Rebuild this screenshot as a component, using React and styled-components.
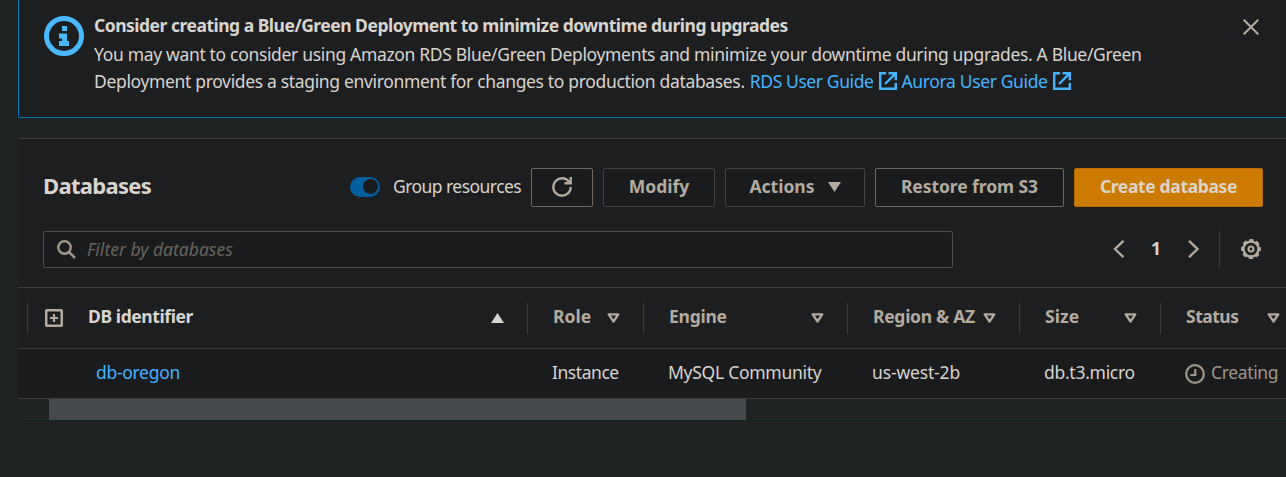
import React from 'react';
import styled, { createGlobalStyle, ThemeProvider } from 'styled-components';

const theme = {
  page: '#1f2324',
  panel: '#1d1e20',
  field: '#1a1b1d',
  line: '#3a3c3e',
  text: '#d8d4cf',
  muted: '#b3aba0',
  faint: '#a09689',
  link: '#44b4ff',
  alert: '#0a77b9',
  orange: '#cc7a00',
};

const GlobalStyle = createGlobalStyle`
  * { box-sizing: border-box; }
  body {
    margin: 0;
    background: ${theme.page};
    color: ${theme.text};
    font-family: "Noto Sans", "Open Sans", sans-serif;
    font-size: 17.5px;
    line-height: 27.5px;
  }
  svg { display: block; flex: none; fill: none; stroke: currentColor; }
`;

const Screen = styled.main`
  width: 1286px;
  height: 477px;
  padding-left: 18px;
  overflow: hidden;
`;

const Alert = styled.section`
  display: flex;
  align-items: flex-start;
  width: 1290px;
  height: 118px;
  padding: 12px 0 0 25px;
  background: ${theme.panel};
  border: 1px solid ${theme.alert};
  border-top: 0;
  border-radius: 0 0 2px 2px;
`;

const InfoIcon = styled.svg`
  margin-top: 4px;
  color: #48b8ff;
`;

const AlertBody = styled.div`
  width: 1146px;
  margin-left: 10px;
`;

const AlertTitle = styled.div`
  height: 28px;
  font-weight: 700;
  letter-spacing: -0.5px;
`;

const AlertLine = styled.div`
  display: flex;
  height: 27px;
  line-height: 28px;
  white-space: pre;
  letter-spacing: ${(p) => p.$ls}px;
`;

const Link = styled.a`
  color: ${theme.link};
  letter-spacing: ${(p) => p.$ls || 0}px;
`;

const DocLink = styled(Link)`
  display: inline-flex;
  gap: 5px;
  margin-left: 5px;
  svg { margin-top: 5px; }
`;

const IconButton = styled.button`
  display: flex;
  align-items: center;
  justify-content: center;
  padding: 0;
  border: 0;
  background: none;
  color: ${theme.muted};
`;

const DismissButton = styled(IconButton)`
  margin: 7px 0 0 3px;
`;

const Panel = styled.section`
  width: 1290px;
  margin-top: 20px;
  background: ${theme.panel};
  border-top: 1px solid ${theme.line};
  box-shadow: 0 1px 1px #152020;
`;

const Header = styled.header`
  display: flex;
  align-items: center;
  height: 68px;
  padding: 29px 0 0 25px;
`;

const Title = styled.h2`
  flex: none;
  width: 307px;
  margin: 0 0 4px;
  font-size: 22px;
  font-weight: 700;
  letter-spacing: -0.7px;
`;

const Toggle = styled.span`
  display: flex;
  justify-content: flex-end;
  width: 30px;
  height: 20px;
  margin-bottom: 2px;
  padding: 2.5px 2px;
  border-radius: 10px;
  background: #025f9e;
  &::after {
    content: '';
    width: 15px;
    height: 15px;
    border-radius: 50%;
    background: ${theme.field};
  }
`;

const ToggleLabel = styled.label`
  width: 138px;
  margin: 0 0 1px 13px;
  letter-spacing: -0.55px;
  white-space: nowrap;
`;

const Actions = styled.div`
  display: flex;
  gap: 10px;
`;

const Button = styled.button`
  display: flex;
  align-items: center;
  justify-content: center;
  gap: 13px;
  width: ${(p) => p.$w}px;
  height: 39px;
  padding: 0 0 3px;
  border: 1px solid ${(p) => (p.$primary ? '#b56d02' : p.$dim ? '#3f4143' : '#6f675b')};
  border-radius: 2px;
  background: ${(p) => (p.$primary ? theme.orange : theme.field)};
  color: ${(p) => (p.$primary ? '#dcd5ca' : theme.muted)};
  font: bold 17.5px "Noto Sans", sans-serif;
  letter-spacing: ${(p) => p.$ls || 0}px;
  white-space: nowrap;
  svg { margin-top: 2px; }
`;

const Tools = styled.div`
  display: flex;
  align-items: center;
  height: 80px;
  padding: 4px 0 0 25px;
`;

const SearchField = styled.div`
  display: flex;
  align-items: center;
  width: 910px;
  height: 37px;
  padding-left: 13px;
  gap: 11px;
  border: 1px solid #4a4c4f;
  border-radius: 2px;
  background: ${theme.field};
  color: ${theme.faint};
`;

const Placeholder = styled.span`
  margin-top: 2px;
  color: #66645e;
  font-style: italic;
`;

const Pager = styled.nav`
  display: flex;
  align-items: center;
  justify-content: space-between;
  width: 86px;
  height: 37px;
  margin-left: 160px;
  color: ${theme.muted};
`;

const PageNumber = styled.b`
  color: ${theme.text};
  font-weight: 700;
`;

const Settings = styled(IconButton)`
  height: 37px;
  margin-left: 20px;
  padding-left: 21px;
  border-left: 1px solid ${theme.line};
`;

const Row = styled.div`
  display: grid;
  grid-template-columns: 500px 116px 204px 172px 141px 143px;
  align-items: center;
  height: ${(p) => p.$h}px;
  padding-left: 9px;
  border-bottom: 1px solid ${theme.line};
`;

const HeadRow = styled(Row)`
  border-top: 1px solid ${theme.line};
`;

const BodyRow = styled(Row)`
  padding-bottom: 1px;
  background: ${theme.field};
`;

const HeadCell = styled.div`
  display: flex;
  align-items: center;
  justify-content: space-between;
  height: 31px;
  padding: 0 23px 0 ${(p) => (p.$first ? 17 : 25)}px;
  border-left: 1px solid ${theme.line};
  color: ${(p) => (p.$first ? theme.text : theme.muted)};
  font-weight: 700;
  letter-spacing: ${(p) => p.$ls}px;
  white-space: nowrap;
`;

const HeadLabel = styled.span`
  display: flex;
  align-items: center;
  gap: 25px;
  height: 31px;
  padding-bottom: 2px;
  svg {
    margin-top: 2px;
    color: ${theme.muted};
  }
`;

const Cell = styled.div`
  display: flex;
  align-items: center;
  gap: 6px;
  padding-left: ${(p) => (p.$first ? 69 : 25)}px;
  color: ${(p) => (p.$pending ? theme.faint : theme.text)};
  letter-spacing: ${(p) => p.$ls || 0}px;
  white-space: nowrap;
  svg { margin-top: 1px; }
`;

const ScrollTrack = styled.div`
  height: 21px;
  padding-left: 31px;
  background: ${theme.page};
`;

const ScrollThumb = styled.div`
  width: 697px;
  height: 21px;
  background: #454a4c;
`;

const ExternalIcon = () => (
  <svg width="18" height="18" viewBox="0 0 18 18" strokeWidth="2.4">
    <path d="M7 1.2H1.2v15.6h15.6V11" />
    <path d="M9.5 1.2h7.3v7M16.5 1.5 6 12" />
  </svg>
);

const Caret = ({ solid, up }) => (
  <svg width="13" height="10" viewBox="0 0 13 10" strokeWidth={solid ? 0 : 2.3} strokeLinejoin="round">
    {solid ? (
      <path fill="currentColor" d={up ? 'M6.5 0 13 10H0z' : 'M6.5 10 0 0h13z'} />
    ) : (
      <path d="M1.7 1.3h9.6L6.5 8.5z" />
    )}
  </svg>
);

const COLUMNS = [
  ['Role', 0],
  ['Engine', -0.25],
  ['Region & AZ', -0.28],
  ['Size', 0.1],
  ['Status', -0.5],
];

export default function App() {
  return (
    <ThemeProvider theme={theme}>
      <GlobalStyle />
      <Screen>
        <Alert>
          <InfoIcon width="40" height="40" viewBox="0 0 40 40">
            <circle cx="20" cy="20" r="17.5" strokeWidth="5" />
            <path stroke="none" fill="currentColor" d="M18 10h5v5h-5zM15 17.5h8V25h2v5H15v-5h3v-2.5h-3z" />
          </InfoIcon>
          <AlertBody>
            <AlertTitle>Consider creating a Blue/Green Deployment to minimize downtime during upgrades</AlertTitle>
            <AlertLine $ls={-0.33}>
              You may want to consider using Amazon RDS Blue/Green Deployments and minimize your downtime during upgrades. A Blue/Green
            </AlertLine>
            <AlertLine $ls={-0.34}>
              Deployment provides a staging environment for changes to production databases.
              <DocLink $ls={-0.4}>RDS User Guide<ExternalIcon /></DocLink>
              <DocLink $ls={-0.36}>Aurora User Guide<ExternalIcon /></DocLink>
            </AlertLine>
          </AlertBody>
          <DismissButton aria-label="Dismiss">
            <svg width="16" height="16" viewBox="0 0 16 16" strokeWidth="2.1">
              <path d="M.7.7l14.6 14.6M15.3.7.7 15.3" />
            </svg>
          </DismissButton>
        </Alert>

        <Panel>
          <Header>
            <Title>Databases</Title>
            <Toggle />
            <ToggleLabel>Group resources</ToggleLabel>
            <Actions>
              <Button $w={62} aria-label="Refresh">
                <svg width="20" height="20" viewBox="0 0 16 16" strokeWidth="1.9">
                  <path d="M15 8c0 3.87-3.13 7-7 7s-7-3.13-7-7 3.13-7 7-7c2.79 0 5.2 1.63 6.33 4" />
                  <path d="M10 5h5V0" />
                </svg>
              </Button>
              <Button $w={112} $dim>Modify</Button>
              <Button $w={140} $dim>Actions<Caret solid /></Button>
              <Button $w={189} $ls={-0.07}>Restore from S3</Button>
              <Button $w={189} $primary $ls={-0.36}>Create database</Button>
            </Actions>
          </Header>

          <Tools>
            <SearchField>
              <svg width="19" height="19" viewBox="0 0 19 19" strokeWidth="2.5">
                <circle cx="7.5" cy="7.5" r="6.2" />
                <path d="M12 12l6 6" />
              </svg>
              <Placeholder>Filter by databases</Placeholder>
            </SearchField>
            <Pager>
              <svg width="12" height="18" viewBox="0 0 12 18" strokeWidth="2.3"><path d="M10.5.8 2 9l8.5 8.2" /></svg>
              <PageNumber>1</PageNumber>
              <svg width="12" height="18" viewBox="0 0 12 18" strokeWidth="2.3"><path d="M2 .8 10.5 9 2 17.2" /></svg>
            </Pager>
            <Settings aria-label="Settings">
              <svg width="20" height="20" viewBox="0 0 20 20">
                <circle cx="10" cy="10" r="7.5" strokeWidth="2.4" />
                <circle cx="10" cy="10" r="9" strokeWidth="2" strokeDasharray="4.27 2.8" strokeDashoffset="2.13" />
                <circle cx="10" cy="10" r="2.5" strokeWidth="2.1" />
              </svg>
            </Settings>
          </Tools>

          <HeadRow $h={62}>
            <HeadCell $first $ls={-0.4}>
              <HeadLabel>
                <svg width="18" height="18" viewBox="0 0 18 18" strokeWidth="2.5">
                  <rect x="1.25" y="1.25" width="15.5" height="15.5" rx=".5" />
                  <path d="M9 5v8M5 9h8" strokeWidth="2.2" />
                </svg>
                DB identifier
              </HeadLabel>
              <Caret solid up />
            </HeadCell>
            {COLUMNS.map(([name, ls]) => (
              <HeadCell key={name} $ls={ls}>
                <HeadLabel>{name}</HeadLabel>
                <Caret />
              </HeadCell>
            ))}
          </HeadRow>

          <BodyRow $h={50}>
            <Cell $first><Link $ls={-0.3}>db-oregon</Link></Cell>
            <Cell $ls={-0.45}>Instance</Cell>
            <Cell $ls={-0.27}>MySQL Community</Cell>
            <Cell $ls={-0.15}>us-west-2b</Cell>
            <Cell $ls={-0.28}>db.t3.micro</Cell>
            <Cell $pending $ls={-0.35}>
              <svg width="20" height="20" viewBox="0 0 20 20" strokeWidth="2.2">
                <circle cx="10" cy="10" r="8.8" />
                <path d="M10.3 5v6H5.3" />
              </svg>
              Creating
            </Cell>
          </BodyRow>
          <ScrollTrack>
            <ScrollThumb />
          </ScrollTrack>
        </Panel>
      </Screen>
    </ThemeProvider>
  );
}
